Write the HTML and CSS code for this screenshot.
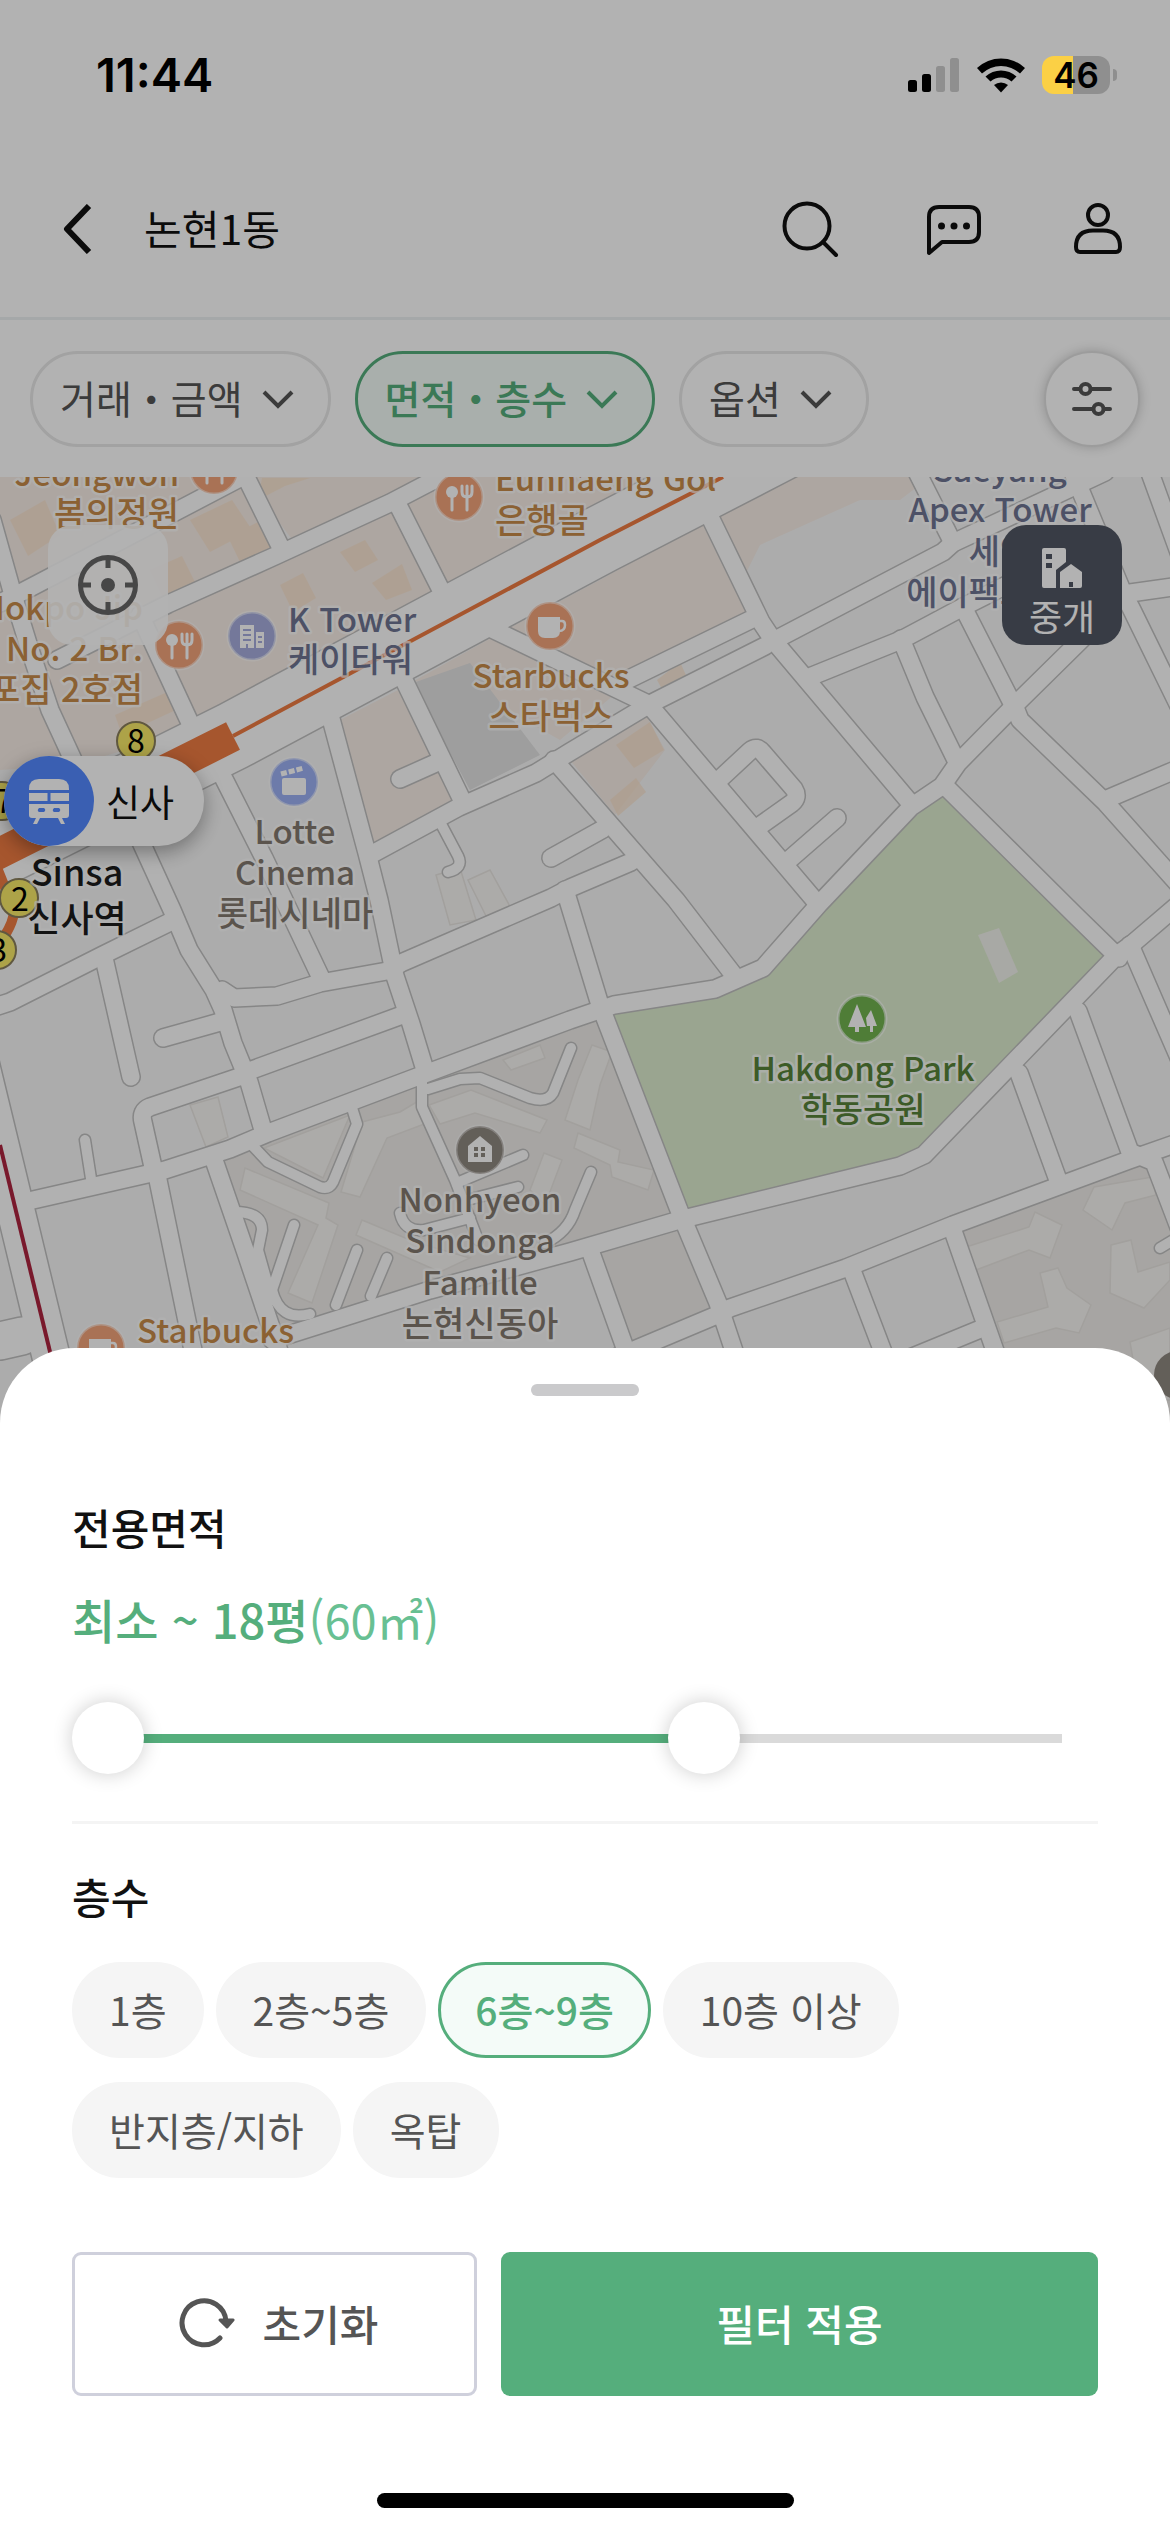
FILE: index.html
```html
<!DOCTYPE html>
<html lang="ko">

<head>
  <meta charset="UTF-8">
  <meta name="viewport" content="width=device-width, initial-scale=1.0">
  <title>논현1동</title>
  <link rel="stylesheet" href="styles.css">
</head>

<body>

  <div class="app">
    <div class="status-bar">
      <span class="time">11:44</span>
      <div class="status-icons">
        <svg width="52" height="36" viewBox="0 0 52 36">
          <rect x="0" y="23" width="9" height="12" rx="2.5" />
          <rect x="14" y="17" width="9" height="18" rx="2.5" />
          <rect x="28" y="9" width="9" height="26" rx="2.5" fill="#8f8f8f" />
          <rect x="42" y="1" width="9" height="34" rx="2.5" fill="#8f8f8f" />
        </svg>
        <svg width="50" height="36" viewBox="0 0 50 36">
          <path d="M1 11 A35 35 0 0 1 49 11 L44 16.500 A28 28 0 0 0 6 16.500 Z" />
          <path d="M9.500 19.500 A23 23 0 0 1 40.500 19.500 L35.500 24.500 A16 16 0 0 0 14.500 24.500 Z" />
          <path d="M18 28 A11 11 0 0 1 32 28 L25 35.500 Z" />
        </svg>
        <div class="battery"><span>46</span></div>
      </div>
    </div>

    <header class="header">
      <a href="#" class="back" aria-label="뒤로">
        <svg width="30" height="50" viewBox="0 0 30 50" fill="none" stroke="currentColor" stroke-width="6">
          <path d="M27 2 L5 25 L27 48" stroke-linejoin="round" />
        </svg>
      </a>
      <h1>논현1동</h1>
      <nav class="header-menu">
        <a href="#" aria-label="검색">
          <svg width="60" height="60" viewBox="0 0 60 60" fill="none" stroke="currentColor" stroke-width="4" stroke-linecap="round">
            <circle cx="27" cy="27" r="22.500" />
            <path d="M43 43 L56 56" />
          </svg>
        </a>
        <a href="#" aria-label="채팅">
          <svg width="60" height="60" viewBox="0 0 60 60" fill="none" stroke="currentColor" stroke-width="4" stroke-linejoin="round">
            <path d="M5 54 V18 Q5 8 15 8 H45 Q55 8 55 18 V33 Q55 43 45 43 H18 Z" />
            <g fill="currentColor" stroke="none">
              <circle cx="17.500" cy="27" r="3.500" />
              <circle cx="30" cy="27" r="3.500" />
              <circle cx="42.500" cy="27" r="3.500" />
            </g>
          </svg>
        </a>
        <a href="#" aria-label="내 정보">
          <svg width="60" height="60" viewBox="0 0 60 60" fill="none" stroke="currentColor" stroke-width="4">
            <circle cx="30" cy="16" r="10" />
            <path d="M12 53 H48 Q52 53 52 48 Q52 31.500 35 31.500 H25 Q8 31.500 8 48 Q8 53 12 53 Z" />
          </svg>
        </a>
      </nav>
    </header>

    <div class="filter-bar">
      <button type="button" class="filter">거래・금액
        <svg class="chevron" width="34" height="20" viewBox="0 0 34 20"><path d="M3 3 L17 17 L31 3" /></svg>
      </button>
      <button type="button" class="filter active">면적・층수
        <svg class="chevron" width="34" height="20" viewBox="0 0 34 20"><path d="M3 3 L17 17 L31 3" /></svg>
      </button>
      <button type="button" class="filter">옵션
        <svg class="chevron" width="34" height="20" viewBox="0 0 34 20"><path d="M3 3 L17 17 L31 3" /></svg>
      </button>
      <button type="button" class="filter-all" aria-label="전체 필터">
        <svg width="42" height="40" viewBox="0 0 42 40" fill="none" stroke="currentColor" stroke-width="4" stroke-linecap="round">
          <path d="M3 10 H9 M20 10 H39 M3 30 H22 M33 30 H39" />
          <circle cx="14.500" cy="10" r="5" />
          <circle cx="27.500" cy="30" r="5" />
        </svg>
      </button>
    </div>

    <main class="map">
      <svg class="map-canvas" viewBox="0 477 1170 950" role="img" aria-label="지도">
        <defs>
          <g id="roads">
            <path d="M0 603 L22 592 L240 478" />
            <path d="M245 475 L282 550" />
            <path d="M57 660 L168 604 L275 556 L390 503 L440 477" />
            <path d="M-8 520 L13 595 L30 650 L50 710 L80 775" />
            <path d="M140 615 L191 725" />
            <path d="M398 505 L440 588" />
            <path d="M130 818 L172 910 L189 950 L214 990 L223 1010 L233 1043 L249 1082 L263 1130" />
            <path d="M222 775 L264 858 L321 978" />
            <path d="M330 715 L367 853 L379 900 L395 976 L411 1024 L425 1070" />
            <path d="M-5 1007 L10 1002 L103 955 L170 922" />
            <path d="M104 958 L131 1077" />
            <path d="M220 1022 L163 1038" />
            <path d="M222 990 L234 998 L277 996 L320 983 L387 971 L401 963 L551 898 L570 888 L631 862" />
            <path d="M551 858 L603 829" />
            <path d="M374 853 L459 807 L536 773 L570 752 L650 704 L765 646" />
            <path d="M627 680 L750 620" />
            <path d="M775 640 L943 552 L953 543 L1105 472" />
            <path d="M812 676 L901 640 L963 607 L1060 558 L1100 540" />
            <path d="M1072 470 L1123 593 L1131 608 L1180 708" />
            <path d="M1123 594 L1180 586" />
            <path d="M1085 636 L1016 704 L958 763 L942 786 L911 807 L820 903 L763 968 L715 989 L614 1005 L570 1020 L430 1072 L268 1133 L230 1149 L165 1170 L33 1200" />
            <path d="M239 1077 L150 1107 Q140 1111 143 1122 L153 1167 L158 1180 L195 1360" />
            <path d="M214 1160 L245 1250 L282 1360" />
            <path d="M249 1071 L405 1014" />
            <path d="M272 1340 L430 1290 L570 1252 L683 1219 L900 1166 L924 1155 L1117 955 L1131 945 L1180 903" />
            <path d="M610 1360 L717 1315 L730 1308 L846 1268 L953 1225 L1129 1160 L1180 1142" />
            <path d="M565 890 L600 1005 L679 1210 L718 1303 L737 1360" />
            <path d="M554 760 L676 900 L736 978" />
            <path d="M650 706 L817 903" />
            <path d="M721 778 L750 751 Q757 745 763 753 L794 789 Q799 797 792 803 L761 825" />
            <path d="M790 859 L837 818" />
            <path d="M710 517 L761 622 L773 640 L912 805" />
            <path d="M901 639 L925 697 L957 762" />
            <path d="M963 607 L1012 703" />
            <path d="M916 470 L953 543" />
            <path d="M1012 700 L1020 720 L1106 803 L1180 886" />
            <path d="M945 786 L1075 915 L1119 958" />
            <path d="M1019 1073 L1058 1180" />
            <path d="M1078 1011 L1130 1152 L1154 1162 L1180 1230" />
            <path d="M1130 945 L1180 1060" />
            <path d="M1107 799 L1180 768" />
            <path d="M952 1228 L1000 1365" />
            <path d="M851 1268 L888 1365" />
            <path d="M978 1330 L905 1360" />
            <path d="M590 1250 L624 1345" />
            <path d="M1149 470 L1180 555" />
            <path d="M404 680 L462 800" />
            <path d="M438 762 L400 779" />
            <path d="M490 628 L648 704" />
          </g>
          <g id="lanes">
            <path d="M85 1140 L92 1185" />
            <path d="M422 1075 L422 1107 L455 1180 L478 1240" />
            <path d="M250 1143 L268 1162 L320 1187 Q329 1190 333 1182 L357 1124 L352 1108" />
            <path d="M428 1089 L460 1079 L480 1078 L530 1098 Q547 1103 553 1093 L571 1048" />
            <path d="M235 1212 Q262 1212 262 1230 L258 1250 L272 1300" />
            <path d="M272 1290 L294 1225" />
            <path d="M336 1305 L357 1250" />
            <path d="M371 1296 L387 1258" />
            <path d="M459 1182 L523 1155" />
            <path d="M467 1200 L518 1187" />
            <path d="M400 1213 Q404 1232 424 1230 L470 1218" />
            <path d="M545 1243 Q568 1232 575 1210 L591 1172" />
            <path d="M440 822 L458 856 Q464 868 448 872" />
            <path d="M1180 1236 L1160 1248" />
            <path d="M272 1290 Q280 1322 310 1314" />
          </g>
          <g id="icon-food">
            <circle r="24" fill="#f3a47a" stroke="#fff" stroke-opacity=".5" stroke-width="3" />
            <circle cx="-7" cy="-5" r="6" fill="#fff" />
            <path d="M-7 0 V13 M8 -11 V13 M3 -11 V-5 Q3 0 8 0 Q13 0 13 -5 V-11" fill="none" stroke="#fff" stroke-width="3" stroke-linecap="round" />
          </g>
          <g id="icon-cafe">
            <circle r="24" fill="#f3a47a" stroke="#fff" stroke-opacity=".5" stroke-width="3" />
            <path d="M-12 -9 H10 V5 Q10 12 3 12 H-5 Q-12 12 -12 5 Z" fill="#fff" />
            <path d="M10 -5 H12 Q15 -5 15 -1 Q15 5 9 5" fill="none" stroke="#fff" stroke-width="2.500" />
          </g>
        </defs>

        <rect x="0" y="477" width="1170" height="950" fill="#f7f7f7" />

        <!-- Blocks and park -->
        <g fill="#f8eee7">
          <path d="M0 477 H245 L282 550 L168 604 L57 660 L0 640 Z" />
          <path d="M245 477 H790 L710 520 L440 590 L191 730 L75 765 L0 770 V640 L168 604 L300 550 Z" />
          <path d="M414 681 L509 628 L600 580 L702 523 L750 620 L627 684 L560 740 L470 690 Z" />
          <path d="M340 720 L398 690 L455 800 L374 848 Z" />
          <path d="M718 515 L794 477 H930 L900 500 L860 500 L760 545 L745 575 Z" />
          <path d="M570 760 L647 717 L665 750 L615 815 Z" />
        </g>
        <g fill="#fbe4cb" opacity=".7">
          <path d="M190 520 L232 500 L252 530 L210 552 Z" />
          <path d="M228 537 L262 520 L275 545 L240 562 Z" />
          <path d="M150 570 L182 556 L196 584 L164 600 Z" />
          <path d="M340 552 L365 540 L378 560 L355 572 Z" />
          <path d="M372 583 L402 564 L412 590 L386 600 Z" />
          <path d="M280 585 L303 573 L316 598 L293 612 Z" />
          <path d="M10 520 L45 500 L60 535 L28 556 Z" />
          <path d="M115 715 L172 690 L180 708 L122 735 Z" />
          <path d="M258 500 L285 486 L310 478 H262 Z" />
          <path d="M657 680 L680 662 L690 684 L668 700 Z" />
          <path d="M616 745 L650 722 L664 750 L634 768 Z" />
          <path d="M610 800 L636 778 L646 792 L618 816 Z" />
        </g>
        <path d="M413 683 L470 663 L540 755 L470 790 Z" fill="#e2e2e2" />
        <path d="M945 790 L1115 957 L922 1155 L905 1162 L684 1217 L610 1008 L715 990 L763 968 L820 903 Z" fill="#ddedce" />
        <path d="M978 935 L999 928 L1018 972 L999 983 Z" fill="#f1f2ec" />

        <!-- Apartment complexes -->
        <g fill="#efedea">
          <path d="M214 1160 L268 1133 L430 1072 L604 1012 L679 1215 L280 1335 Z" />
          <path d="M955 1228 L1145 1162 L1180 1250 V1427 H1020 Z" />
          <path d="M592 1253 L681 1225 L715 1310 L628 1342 Z" />
        </g>
        <g fill="#f7f5f2" stroke="#e8e5e1" stroke-width="1.500">
          <path d="M245 1168 L329 1203 L326 1218 L338 1225 L312 1303 L288 1293 L318 1225 L240 1190 Z" />
          <path d="M362 1122 L400 1112 L420 1100 L427 1123 L387 1138 L360 1197 L341 1192 Z" />
          <path d="M264 1148 L350 1115 L323 1178 Z" />
          <path d="M429 1105 L471 1090 L547 1120 L540 1133 L475 1113 L440 1124 Z" />
          <path d="M503 1060 L540 1045 L545 1058 L511 1070 Z" />
          <path d="M592 1045 L612 1052 L600 1085 L590 1130 L565 1120 L578 1080 Z" />
          <path d="M578 1133 L620 1150 L618 1162 L654 1170 L648 1190 L612 1177 L610 1165 L574 1148 Z" />
          <path d="M362 1220 L415 1242 L470 1258 L440 1272 L356 1235 Z" />
          <path d="M544 1153 L562 1160 L545 1205 L530 1190 Z" />
          <path d="M190 1105 L218 1097 L228 1137 L206 1147 Z" />
          <path d="M436 875 L460 868 L476 920 L450 925 Z" />
          <path d="M468 880 L490 870 L512 910 L486 916 Z" />
          <path d="M966 1247 L1029 1227 L1035 1212 L1062 1225 L1050 1258 L1029 1250 L976 1270 Z" />
          <path d="M1083 1210 L1094 1187 L1152 1177 L1156 1195 L1125 1203 L1112 1230 Z" />
          <path d="M997 1322 L1048 1307 L1040 1273 L1058 1268 L1067 1288 L1091 1305 L1079 1333 L1056 1328 L1004 1343 Z" />
          <path d="M1111 1245 L1131 1240 L1138 1272 L1170 1262 V1280 L1144 1308 L1110 1293 Z" />
          <path d="M1130 1342 L1170 1328 V1400 H1140 Z" />
        </g>

        <g fill="none" stroke-linecap="round" stroke-linejoin="round">
          <g stroke="#c0c0c0">
            <use href="#roads" stroke-width="20" />
            <use href="#lanes" stroke-width="13" />
            <path d="M-20 862 L233 736 L600 540 L780 447" stroke-width="70" />
            <path d="M-32 1013 L0 1145 L62 1402 M0 1341 L22 1336" stroke-width="40" />
          </g>
          <g stroke="#fefefe">
            <use href="#roads" stroke-width="17" />
            <use href="#lanes" stroke-width="10" />
            <path d="M-20 862 L233 736 L600 540 L780 447" stroke-width="67" />
            <path d="M-32 1013 L0 1145 L62 1402 M0 1341 L22 1336" stroke-width="37" />
          </g>
        </g>

        <!-- Subway lines -->
        <g fill="none" stroke="#ee7b42">
          <path d="M233 736 L600 540 L723 477" stroke-width="4" />
          <path d="M-10 858 L233 736" stroke-width="31" />
          <path d="M-4 948 Q14 925 14 910 L-2 870" stroke-width="10" />
        </g>
        <path d="M0 1145 L52 1360" fill="none" stroke="#ae2540" stroke-width="4" />

        <g class="exit">
          <circle cx="136" cy="741" r="19" /><text x="136" y="753">8</text>
          <circle cx="2" cy="801" r="19" /><text x="4" y="813">7</text>
          <circle cx="19" cy="898" r="19" /><text x="20" y="911">2</text>
          <circle cx="-3" cy="950" r="19" /><text x="-2" y="962">3</text>
        </g>

        <!-- Places -->
        <use href="#icon-food" x="214" y="470" />
        <use href="#icon-food" x="459" y="497" />
        <use href="#icon-food" x="179" y="645" />
        <use href="#icon-cafe" x="550" y="626" />
        <use href="#icon-cafe" x="101" y="1348" />
        <g transform="translate(252 636)">
          <circle r="24" fill="#a6addd" stroke="#fff" stroke-opacity=".5" stroke-width="3" />
          <path d="M-12 12 V-11 H2 V12 Z M4 12 V-4 H12 V12 Z" fill="#fff" />
          <path d="M-9 -6 H-1 M-9 -1 H-1 M-9 4 H-1 M6 1 H10 M6 6 H10 M-5 12 V8" stroke="#a6addd" stroke-width="2" />
        </g>
        <g transform="translate(294 782)">
          <circle r="24" fill="#9cb0f4" stroke="#fff" stroke-opacity=".5" stroke-width="3" />
          <rect x="-12" y="-4" width="24" height="17" rx="2" fill="#fff" />
          <path d="M-13 -8 L10 -14" stroke="#fff" stroke-width="5" stroke-dasharray="6 2" />
        </g>
        <g transform="translate(862 1019)">
          <circle r="24" fill="#71b450" stroke="#fff" stroke-opacity=".6" stroke-width="3" />
          <path d="M-5 -15 L4 8 H-3 V13 H-7 V8 H-14 Z" fill="#fff" />
          <path d="M9 -9 L15 7 H11 V13 H8 V7 H5 L4 -1 Z" fill="#fff" />
        </g>
        <g transform="translate(480 1150)">
          <circle r="24" fill="#8f8880" stroke="#fff" stroke-opacity=".4" stroke-width="3" />
          <path d="M-12 12 V-4 L0 -14 L12 -4 V12 Z" fill="#fff" />
          <path d="M-4 -3 V7 M3 -3 V7" stroke="#8f8880" stroke-width="4" stroke-dasharray="4 2" />
        </g>
        <circle cx="1178" cy="1375" r="24" fill="#8f8880" />

        <g class="place food end">
          <text class="en" x="179" y="486">Jeongwon</text>
          <text x="179" y="526">봄의정원</text>
          <text class="en" x="143" y="620">Mokpo Jip</text>
          <text class="en" x="143" y="661">No. 2 Br.</text>
          <text x="143" y="702">포집 2호점</text>
        </g>
        <g class="place food start">
          <text class="en" x="495" y="491">Eunhaeng Gol</text>
          <text x="495" y="533">은행골</text>
          <text class="en" x="137" y="1343">Starbucks</text>
        </g>
        <g class="place food">
          <text class="en" x="551" y="688">Starbucks</text>
          <text x="551" y="729">스타벅스</text>
        </g>
        <g class="place office start">
          <text class="en" x="288" y="632">K Tower</text>
          <text x="288" y="672">케이타워</text>
        </g>
        <g class="place office">
          <text class="en" x="1000" y="482">Saeyang</text>
          <text class="en" x="1000" y="522">Apex Tower</text>
          <text x="1000" y="564">세양</text>
          <text x="1000" y="605">에이팩스타워</text>
        </g>
        <g class="place">
          <text class="en" x="295" y="844">Lotte</text>
          <text class="en" x="295" y="885">Cinema</text>
          <text x="295" y="926">롯데시네마</text>
          <text class="en" x="480" y="1212">Nonhyeon</text>
          <text class="en" x="480" y="1253">Sindonga</text>
          <text class="en" x="480" y="1295">Famille</text>
          <text x="480" y="1336">논현신동아</text>
        </g>
        <g class="place park">
          <text class="en" x="863" y="1081">Hakdong Park</text>
          <text x="863" y="1122">학동공원</text>
        </g>
        <g class="place station">
          <text x="77" y="886">Sinsa</text>
          <text x="77" y="932">신사역</text>
        </g>
      </svg>

      <button type="button" class="marker">
        <span class="marker-icon">
          <svg width="42" height="46" viewBox="0 0 42 46" fill="#fff">
            <path d="M1 11 Q1 1 11 1 H31 Q41 1 41 11 V12 H1 Z" />
            <path d="M1 15 H19.500 V23 H1 Z M22.500 15 H41 V23 H22.500 Z" />
            <path fill-rule="evenodd" d="M1 26 H41 V37 Q41 40 38 40 H4 Q1 40 1 37 Z M11 30 q-2.500 2.500 0 4 h5 q2.500 -2 0 -4 Z M26 30 q-2.500 2.500 0 4 h5 q2.500 -2 0 -4 Z" />
            <path d="M8 40 H12 L9 46 H5 Z M30 40 H34 L37 46 H33 Z" />
          </svg>
        </span>
        신사
      </button>

      <div class="map-tools">
        <button type="button" class="tool locate" aria-label="현재 위치">
          <svg width="60" height="60" viewBox="0 0 60 60" fill="none" stroke="currentColor" stroke-width="5">
            <circle cx="30" cy="30" r="27.500" />
            <path d="M30 3 V13 M30 47 V57 M3 30 H13 M47 30 H57" />
            <circle cx="30" cy="30" r="7" fill="currentColor" stroke="none" />
          </svg>
        </button>
        <button type="button" class="tool agency">
          <svg width="42" height="42" viewBox="0 0 42 42" fill="currentColor">
            <path fill-rule="evenodd" d="M3 1 H23 Q25 1 25 3 V15 L15 23 V41 H3 Q1 41 1 39 V3 Q1 1 3 1 Z M5 7 V12 H11 V7 Z M5 16 V21 H11 V16 Z" />
            <path fill-rule="evenodd" d="M19 25 L30 17 L41 25 V39 Q41 41 39 41 H19 Z M28 35 V40 H32 V35 Z" />
          </svg>
          중개
        </button>
      </div>
    </main>

    <div class="backdrop"></div>

    <section class="sheet">
      <div class="handle"></div>
      <form>
        <h2 class="area-title">전용면적</h2>
        <p class="area-value">최소 ~ 18평<span>(60㎡)</span></p>
        <div class="range">
          <div class="range-track">
            <div class="range-fill" style="width: 62.5%"></div>
          </div>
          <input type="range" min="0" max="48" value="0" aria-label="최소 면적">
          <input type="range" min="0" max="48" value="30" aria-label="최대 면적">
        </div>

        <hr>

        <h2>층수</h2>
        <div class="floors">
          <label class="floor"><input type="checkbox" name="floor"><span>1층</span></label>
          <label class="floor"><input type="checkbox" name="floor"><span>2층~5층</span></label>
          <label class="floor"><input type="checkbox" name="floor" checked><span>6층~9층</span></label>
          <label class="floor"><input type="checkbox" name="floor"><span>10층 이상</span></label>
          <label class="floor"><input type="checkbox" name="floor"><span>반지층/지하</span></label>
          <label class="floor"><input type="checkbox" name="floor"><span>옥탑</span></label>
        </div>

        <div class="actions">
          <button type="reset" class="btn btn-reset">
            <svg width="56" height="52" viewBox="0 0 56 52" fill="none" stroke="currentColor" stroke-width="5" stroke-linecap="round">
              <path d="M41 41 A22 22 0 1 1 47 24" />
              <path d="M41 23 L48 30 L54 23 Z" fill="currentColor" stroke-width="3" stroke-linejoin="round" />
            </svg>
            초기화
          </button>
          <button type="submit" class="btn btn-apply">필터 적용</button>
        </div>
      </form>
      <div class="home-indicator"></div>
    </section>
  </div>

</body>

</html>
```
FILE: styles.css
```css
* {
  box-sizing: border-box;
}

body {
  margin: 0;
  font-family: "Noto Sans CJK KR", "Noto Sans", sans-serif;
  color: #111;
  background-color: white;
}

button {
  padding: 0;
  border: none;
  font-family: inherit;
  cursor: pointer;
}

a {
  color: inherit;
}

svg {
  display: block;
  flex-shrink: 0;
}

.app {
  position: relative;
  display: flex;
  flex-direction: column;
  min-height: 100vh;
  overflow: hidden;
}

/* Status bar */
.status-bar {
  position: relative;
  z-index: 3;
  display: flex;
  justify-content: space-between;
  align-items: center;
  height: 141px;
  padding: 8px 52px 0 96px;
  font-family: Inter, sans-serif;
  font-weight: 600;
  color: black;
}

.time {
  font-size: 47px;
}

.status-icons {
  display: flex;
  align-items: center;
  gap: 16px;
}

.battery {
  position: relative;
  width: 68px;
  height: 38px;
  margin-right: 8px;
  border-radius: 12px;
  background: linear-gradient(90deg, #fbd045 46%, #8f8f8f 46%);
  font-size: 35px;
  line-height: 38px;
  text-align: center;
}

.battery::after {
  content: "";
  position: absolute;
  top: 13px;
  right: -7px;
  width: 4px;
  height: 12px;
  border-radius: 0 4px 4px 0;
  background-color: #8f8f8f;
}

/* Header */
.header {
  display: flex;
  align-items: center;
  height: 179px;
  padding: 0 42px 0 62px;
  border-bottom: 3px solid #edf1f2;
}

.header h1 {
  margin: 0 0 4px 52px;
  font-size: 41px;
  font-weight: 400;
}

.header-menu {
  display: flex;
  gap: 84px;
  margin-left: auto;
}

/* Filters */
.filter-bar {
  display: flex;
  align-items: center;
  gap: 24px;
  height: 157px;
  padding: 0 30px;
}

.filter {
  display: flex;
  align-items: center;
  gap: 18px;
  height: 96px;
  padding: 0 33px 3px 27px;
  border: 3px solid #e8e8e8;
  border-radius: 48px;
  background-color: white;
  font-size: 39px;
  color: #555;
}

.filter.active {
  border-color: #55ae7c;
  background-color: #f3fbf7;
  font-weight: 500;
  color: #55ae7c;
}

.chevron {
  margin-top: 3px;
  fill: none;
  stroke: currentColor;
  stroke-width: 4;
}

.filter-all {
  display: flex;
  align-items: center;
  justify-content: center;
  width: 96px;
  height: 96px;
  margin-left: auto;
  border: 2px solid #e0e0e0;
  border-radius: 50%;
  background-color: white;
  box-shadow: 0 0 12px rgba(0, 0, 0, 0.2);
  color: #555;
}

/* Map */
.map {
  position: relative;
}

.map-canvas {
  width: 100%;
  height: auto;
}

.place {
  font-size: 34px;
  font-weight: 500;
  text-anchor: middle;
  fill: #83796f;
  stroke: rgba(255, 255, 255, 0.7);
  stroke-width: 5px;
  stroke-linejoin: round;
  paint-order: stroke;
}

.place .en {
  font-size: 33px;
}

.place.start {
  text-anchor: start;
}

.place.end {
  text-anchor: end;
}

.place.food {
  fill: #c88c4a;
}

.place.office {
  fill: #6f7592;
}

.place.park {
  fill: #568339;
}

.place.station {
  font-size: 36px;
  fill: #1c1c1c;
}

.exit {
  font-size: 32px;
  text-anchor: middle;
}

.exit circle {
  fill: #f8ea68;
  stroke: #8a7f5c;
  stroke-width: 2px;
}

.marker {
  position: absolute;
  top: 279px;
  left: 4px;
  display: flex;
  align-items: center;
  gap: 12px;
  height: 90px;
  padding-right: 30px;
  border-radius: 45px;
  background-color: white;
  box-shadow: 0 6px 20px rgba(0, 0, 0, 0.35);
  font-size: 37px;
  color: #111;
}

.marker-icon {
  display: flex;
  align-items: center;
  justify-content: center;
  width: 90px;
  height: 90px;
  border-radius: 50%;
  background-color: #5389ff;
}

.map-tools {
  position: absolute;
  top: 48px;
  left: 48px;
  right: 48px;
  display: flex;
  justify-content: space-between;
}

.tool {
  display: flex;
  flex-direction: column;
  align-items: center;
  justify-content: center;
  width: 120px;
  height: 120px;
  border-radius: 24px;
  font-size: 36px;
  line-height: 52px;
}

.locate {
  background-color: rgba(255, 255, 255, 0.9);
  color: #666;
}

.agency {
  padding-top: 18px;
  background-color: #515763;
  color: white;
}

.backdrop {
  position: absolute;
  inset: 0;
  z-index: 2;
  background-color: rgba(0, 0, 0, 0.3);
}

/* Bottom sheet */
.sheet {
  position: absolute;
  bottom: 0;
  left: 0;
  right: 0;
  z-index: 4;
  padding: 36px 72px 24px;
  border-radius: 75px 75px 0 0;
  background-color: white;
}

.handle {
  width: 108px;
  height: 12px;
  margin: 0 auto 101px;
  border-radius: 6px;
  background-color: #cacacc;
}

.sheet h2 {
  margin: 0;
  font-size: 42px;
  font-weight: 500;
  line-height: 60px;
}

.area-value {
  margin: 26px 0 47px;
  font-size: 47px;
  font-weight: 500;
  line-height: 72px;
  color: #55ae7c;
}

.area-value span {
  font-weight: 400;
  color: #68c093;
}

.range {
  display: grid;
  align-items: center;
}

.range-track,
.range input {
  grid-area: 1 / 1;
}

.range-track {
  height: 9px;
  margin: 0 36px;
  background-color: #dadada;
}

.range-fill {
  height: 9px;
  background-color: #55ae7c;
}

.range input {
  width: 100%;
  height: 72px;
  margin: 0;
  background: none;
  appearance: none;
  pointer-events: none;
}

.range input::-webkit-slider-thumb {
  width: 72px;
  height: 72px;
  border-radius: 50%;
  background-color: white;
  box-shadow: 0 0 20px rgba(0, 0, 0, 0.2);
  appearance: none;
  pointer-events: auto;
}

.sheet hr {
  height: 3px;
  margin: 47px 0 42px;
  border: none;
  background-color: #f4f4f4;
}

.floors {
  display: flex;
  flex-wrap: wrap;
  gap: 24px 12px;
  margin: 36px 120px 74px 0;
}

.floor {
  position: relative;
}

.floor input {
  position: absolute;
  inset: 0;
  margin: 0;
  opacity: 0;
}

.floor span {
  display: flex;
  align-items: center;
  height: 96px;
  padding: 0 34px 3px;
  border: 3px solid #f5f5f5;
  border-radius: 48px;
  background-color: #f5f5f5;
  font-size: 39px;
  color: #555;
}

.floor input:checked + span {
  border-color: #55ae7c;
  background-color: #f4fbf8;
  font-weight: 500;
  color: #55ae7c;
}

.actions {
  display: grid;
  grid-template-columns: 405fr 597fr;
  gap: 24px;
}

.btn {
  display: flex;
  align-items: center;
  justify-content: center;
  gap: 28px;
  height: 144px;
  padding-bottom: 3px;
  border-radius: 9px;
  font-size: 42px;
  font-weight: 500;
}

.btn-reset {
  padding-left: 8px;
  border: 3px solid #cfd0dc;
  background-color: white;
  color: #555;
}

.btn-apply {
  background-color: #55ae7c;
  color: white;
}

.home-indicator {
  width: 417px;
  height: 15px;
  margin: 97px auto 0;
  border-radius: 8px;
  background-color: black;
}
```
